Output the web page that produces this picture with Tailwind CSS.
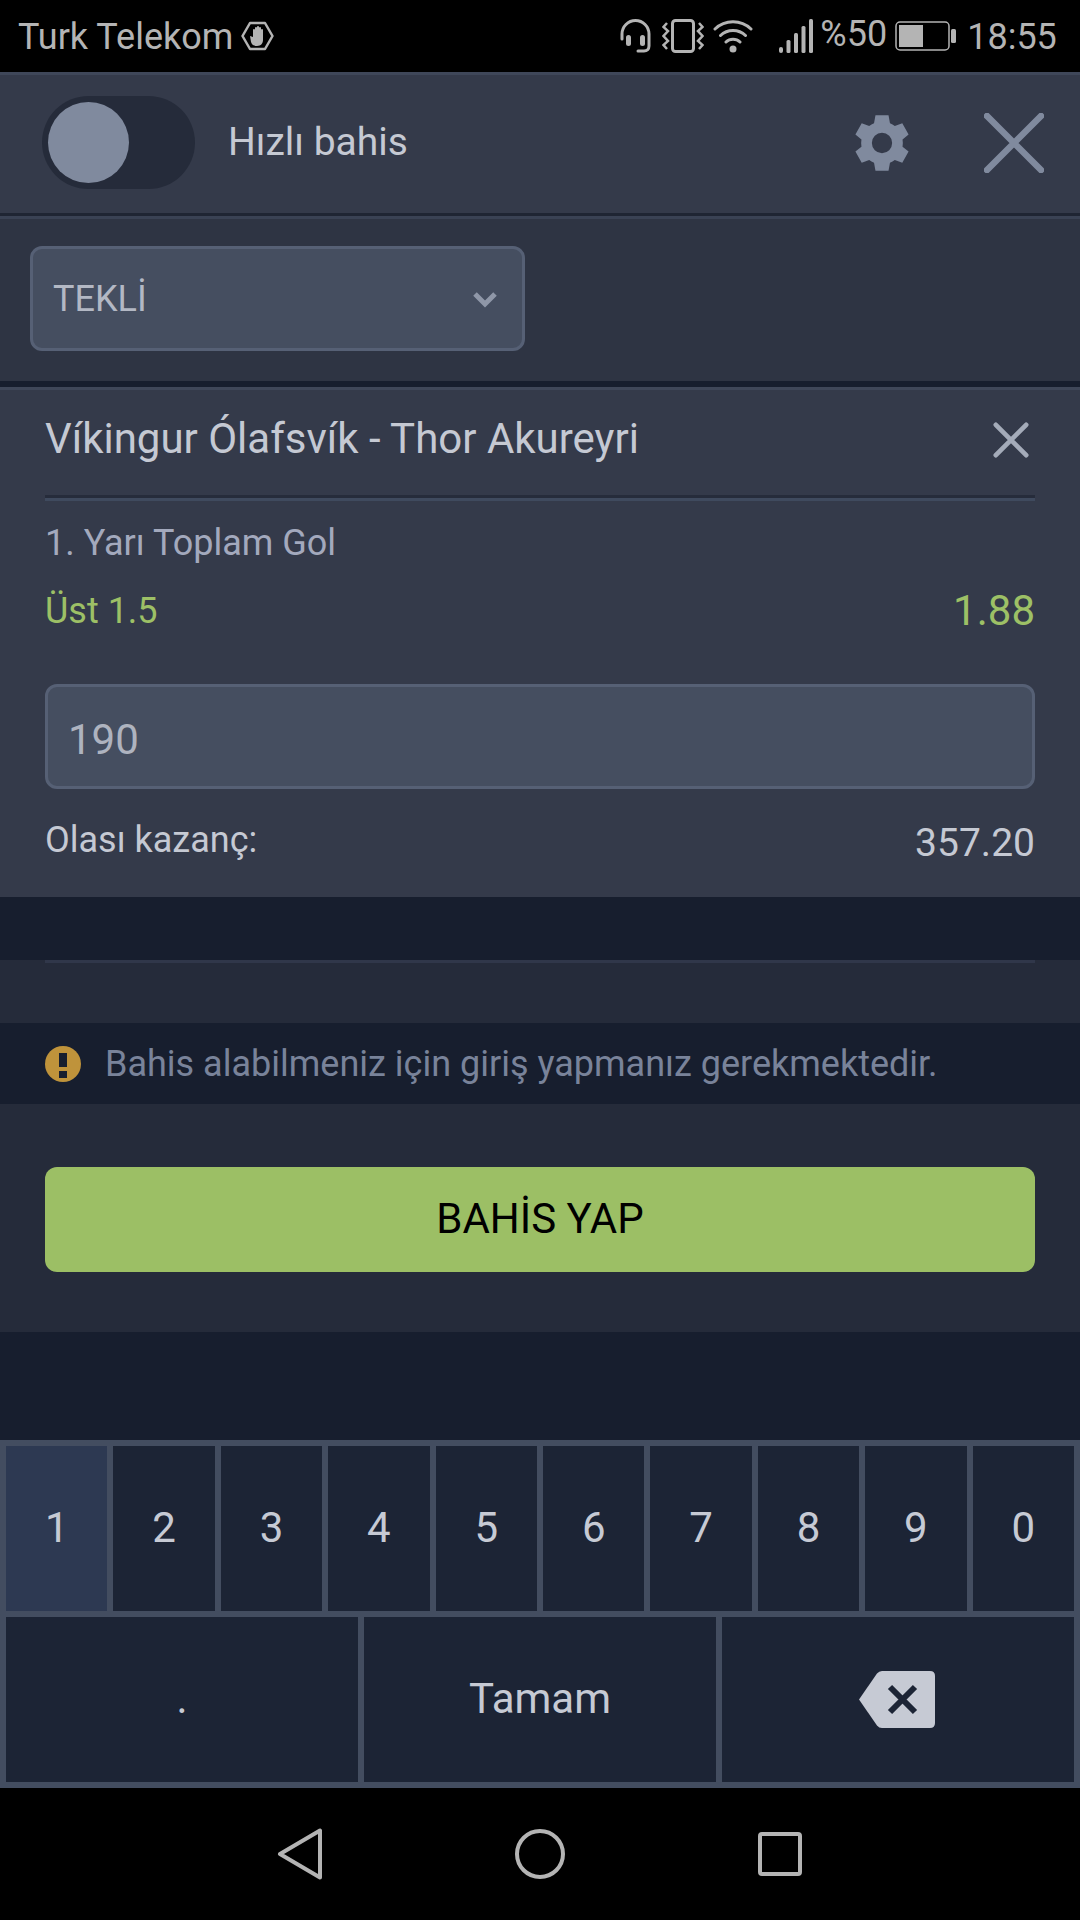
<!DOCTYPE html>
<html lang="tr">
<head>
    <meta charset="UTF-8">
    <meta name="viewport" content="width=device-width, initial-scale=1.0">
    <title>Hızlı bahis</title>
    <script src="https://cdn.jsdelivr.net/npm/@tailwindcss/browser@4"></script>
</head>
<body class="bg-black">
<div class="w-[1080px] h-[1920px] flex flex-col overflow-hidden font-['Roboto',sans-serif] text-[36px] bg-[#171e2e]">

    <!-- Status bar -->
    <div class="h-[72px] shrink-0 bg-black flex items-center text-[#b4b4b4] pl-[18px]">
        <span class="leading-none mt-[2px]">Turk Telekom</span>
        <svg class="ml-[8px] w-[33px] h-[30px]" viewBox="0 0 33 30">
            <path d="M9 2h15l7.500 13L24 28H9L1.500 15z" fill="none" stroke="#b4b4b4" stroke-width="2.500" stroke-linejoin="round"/>
            <path d="M9 15l3 1V9a1 1 0 0 1 2 0V7a1 1 0 0 1 2 0V6a1 1 0 0 1 2 0v1a1 1 0 0 1 2 0v2a1 1 0 0 1 2 0v10c0 3-2 6-6 6-3 0-5-1-6-4z" fill="#b4b4b4"/>
        </svg>
        <svg class="ml-[346px] w-[31px] h-[34px]" viewBox="0 0 31 34">
            <path d="M2 20V15a13.500 13.500 0 0 1 27 0v12c0 3-2 5-5 5h-6" fill="none" stroke="#b4b4b4" stroke-width="3" stroke-linecap="round"/>
            <rect x="6" y="16" width="5" height="11" rx="2.500" fill="#b4b4b4"/>
            <rect x="20" y="16" width="5" height="11" rx="2.500" fill="#b4b4b4"/>
        </svg>
        <svg class="ml-[11px] w-[42px] h-[34px]" viewBox="0 0 42 34">
            <rect x="10.500" y="1.500" width="21" height="31" rx="3" fill="none" stroke="#b4b4b4" stroke-width="3"/>
            <path d="M5 4L1.500 8 6 12 1.500 17 6 22 1.500 26 5 30M37 4l3.500 4L36 12l4.500 5L36 22l4.500 4L37 30" fill="none" stroke="#b4b4b4" stroke-width="2.500"/>
        </svg>
        <svg class="ml-[9px] w-[40px] h-[34px]" viewBox="0 0 40 34">
            <path d="M2 10a26 26 0 0 1 36 0M7.500 16.500a18 18 0 0 1 25 0M13 23a10 10 0 0 1 14 0" fill="none" stroke="#b4b4b4" stroke-width="3" stroke-linecap="round"/>
            <circle cx="20" cy="30" r="3.500" fill="#b4b4b4"/>
        </svg>
        <svg class="ml-[26px] w-[35px] h-[35px]" viewBox="0 0 35 35">
            <rect x="0" y="28" width="4" height="6" rx="2" fill="#b4b4b4"/>
            <rect x="7.500" y="21" width="4" height="13" rx="1.500" fill="#b4b4b4"/>
            <rect x="15" y="14" width="4" height="20" rx="1.500" fill="#b4b4b4"/>
            <rect x="22.500" y="7" width="4" height="27" rx="1.500" fill="#b4b4b4"/>
            <rect x="30" y="0" width="4" height="34" rx="1.500" fill="#b4b4b4"/>
        </svg>
        <span class="ml-[6px] leading-none -mt-[5px]">%50</span>
        <svg class="ml-[8px] w-[61px] h-[30px]" viewBox="0 0 61 30">
            <rect x="1" y="1" width="53" height="28" rx="4" fill="none" stroke="#b4b4b4" stroke-width="1.500"/>
            <rect x="4" y="4" width="24" height="22" fill="#b4b4b4"/>
            <rect x="56" y="8" width="5" height="14" rx="1.500" fill="#b4b4b4"/>
        </svg>
        <span class="ml-[11px] leading-none mt-[2px]">18:55</span>
    </div>

    <!-- Header -->
    <div class="h-[141px] shrink-0 bg-[#343a4a] border-t-[3px] border-[#3f4759] flex items-center pl-[42px] pr-[36px] pb-[3px]">
        <div class="w-[153px] h-[93px] rounded-full bg-[#252b3a] flex items-center pl-[6px]">
            <div class="w-[81px] h-[81px] rounded-full bg-[#808a9e]"></div>
        </div>
        <span class="ml-[33px] text-[39px] text-[#c5c9d3]">Hızlı bahis</span>
        <svg class="ml-auto w-[58px] h-[60px]" viewBox="0 0 24 24" fill="#808a9e">
            <path fill-rule="evenodd" d="M9.300 0.500h5.400l0.600 3.300a8.600 8.600 0 0 1 2 1.150l3.100-1.150 2.600 4.700-2.500 2a8.600 8.600 0 0 1 0 3l2.500 2-2.600 4.700-3.100-1.150a8.600 8.600 0 0 1-2 1.150l-0.600 3.300H9.300l-0.600-3.300a8.600 8.600 0 0 1-2-1.150L3.600 20.200 1 15.500l2.500-2a8.600 8.600 0 0 1 0-3L1 8.500l2.600-4.700 3.100 1.150a8.600 8.600 0 0 1 2-1.150zM12 7.800a4.200 4.200 0 1 0 0 8.400 4.200 4.200 0 0 0 0-8.400z"/>
        </svg>
        <svg class="ml-[73px] w-[60px] h-[60px]" viewBox="0 0 60 60">
            <path d="M3 3l54 54M57 3L3 57" stroke="#808a9e" stroke-width="6.500" stroke-linecap="round"/>
        </svg>
    </div>

    <!-- Bet type -->
    <div class="h-[174px] shrink-0 bg-[#2e3443] border-t-[3px] border-t-[#1f2533] border-b-[6px] border-b-[#171e2e] flex flex-col">
        <div class="h-[3px] bg-[#3a4254]"></div>
        <div class="w-[495px] h-[105px] ml-[30px] mt-[27px] bg-[#454e60] border-[3px] border-[#566075] rounded-[12px] flex items-center pl-[20px] pr-[24px] text-[#b3b8c4]">
            <span>TEKLİ</span>
            <svg class="ml-auto w-[26px] h-[18px]" viewBox="0 0 26 18">
                <path d="M3 4l10 10L23 4" fill="none" stroke="#8f97a8" stroke-width="5"/>
            </svg>
        </div>
    </div>

    <!-- Selection card -->
    <div class="h-[510px] shrink-0 bg-[#343a4a] border-t-[3px] border-[#3f4759] px-[45px]">
        <div class="h-[105px] pb-[9px] flex items-center justify-between text-[42px] text-[#c5c9d3]">
            <span>Víkingur Ólafsvík - Thor Akureyri</span>
            <svg class="w-[36px] h-[36px] mr-[6px] mt-[3px]" viewBox="0 0 38 38">
                <path d="M3 3l32 32M35 3L3 35" stroke="#a4abb9" stroke-width="5" stroke-linecap="round"/>
            </svg>
        </div>
        <div class="h-[6px] bg-[#3f4a5e] border-t-[3px] border-[#262c3b]"></div>
        <div class="h-[83px] flex items-center text-[#a3a9bd]">1. Yarı Toplam Gol</div>
        <div class="h-[52px] flex items-center justify-between text-[#9dc066]">
            <span class="mt-[2px]">Üst 1.5</span>
            <span class="text-[42px]">1.88</span>
        </div>
        <div class="mt-[48px] h-[105px] bg-[#454e60] border-[3px] border-[#566075] rounded-[12px] flex items-center pl-[20px] pt-[5px] text-[42px] text-[#aeb3bf]">190</div>
        <div class="mt-[23px] flex items-center justify-between text-[#c5c9d3]">
            <span class="-mt-[4px]">Olası kazanç:</span>
            <span class="text-[39px] mt-[2px]">357.20</span>
        </div>
    </div>

    <div class="h-[63px] shrink-0"></div>

    <!-- Footer panel -->
    <div class="h-[372px] shrink-0 bg-[#252b3a] flex flex-col">
        <div class="h-[3px] mx-[45px] bg-[#30374a]"></div>
        <div class="mt-[60px] h-[81px] bg-[#171e2e] flex items-center pl-[45px] text-[#79839a]">
            <svg class="w-[36px] h-[36px]" viewBox="0 0 36 36">
                <circle cx="18" cy="18" r="18" fill="#bf933b"/>
                <rect x="14" y="7" width="8" height="14" fill="#171e2e"/>
                <rect x="14" y="25" width="8" height="7" fill="#171e2e"/>
            </svg>
            <span class="ml-[24px]">Bahis alabilmeniz için giriş yapmanız gerekmektedir.</span>
        </div>
        <button class="mt-[63px] mx-[45px] h-[105px] pb-[2px] rounded-[12px] bg-[#9cbf65] text-[42px] text-black flex items-center justify-center">BAHİS YAP</button>
    </div>

    <div class="h-[108px] shrink-0"></div>

    <!-- Keypad -->
    <div class="h-[348px] shrink-0 bg-[#434d60] p-[6px] flex flex-col gap-[6px] text-[42px] text-[#c6cad4]">
        <div class="grid grid-cols-10 gap-[6px] h-[165px]">
            <div class="bg-[#2d3952] pb-[2px] flex items-center justify-center">1</div>
            <div class="bg-[#1c2435] pb-[2px] flex items-center justify-center">2</div>
            <div class="bg-[#1c2435] pb-[2px] flex items-center justify-center">3</div>
            <div class="bg-[#1c2435] pb-[2px] flex items-center justify-center">4</div>
            <div class="bg-[#1c2435] pb-[2px] flex items-center justify-center">5</div>
            <div class="bg-[#1c2435] pb-[2px] flex items-center justify-center">6</div>
            <div class="bg-[#1c2435] pb-[2px] flex items-center justify-center">7</div>
            <div class="bg-[#1c2435] pb-[2px] flex items-center justify-center">8</div>
            <div class="bg-[#1c2435] pb-[2px] flex items-center justify-center">9</div>
            <div class="bg-[#1c2435] pb-[2px] flex items-center justify-center">0</div>
        </div>
        <div class="grid grid-cols-3 gap-[6px] h-[165px]">
            <div class="bg-[#1c2435] pb-[2px] flex items-center justify-center">.</div>
            <div class="bg-[#1c2435] pb-[2px] flex items-center justify-center">Tamam</div>
            <div class="bg-[#1c2435] flex items-center justify-center">
                <svg class="w-[76px] h-[57px] -ml-[3px]" viewBox="0 0 76 57">
                    <path d="M0 28.500L18 2.500Q20 0 23 0H71Q76 0 76 5V52Q76 57 71 57H23Q20 57 18 54.500z" fill="#c6cad4"/>
                    <path d="M31 16l25 25M56 16L31 41" stroke="#1c2435" stroke-width="6"/>
                </svg>
            </div>
        </div>
    </div>

    <!-- Navigation bar -->
    <div class="h-[132px] shrink-0 bg-black flex items-center">
        <svg class="ml-[277px] w-[46px] h-[52px]" viewBox="0 0 46 52">
            <path d="M3 26L43 2.500V49.500z" fill="none" stroke="#b4b4b4" stroke-width="4" stroke-linejoin="round"/>
        </svg>
        <svg class="ml-[192px] w-[50px] h-[50px]" viewBox="0 0 50 50">
            <circle cx="25" cy="25" r="23" fill="none" stroke="#b4b4b4" stroke-width="4"/>
        </svg>
        <svg class="ml-[193px] w-[44px] h-[44px]" viewBox="0 0 44 44">
            <rect x="2" y="2" width="40" height="40" rx="2" fill="none" stroke="#b4b4b4" stroke-width="4"/>
        </svg>
    </div>
</div>
</body>
</html>
